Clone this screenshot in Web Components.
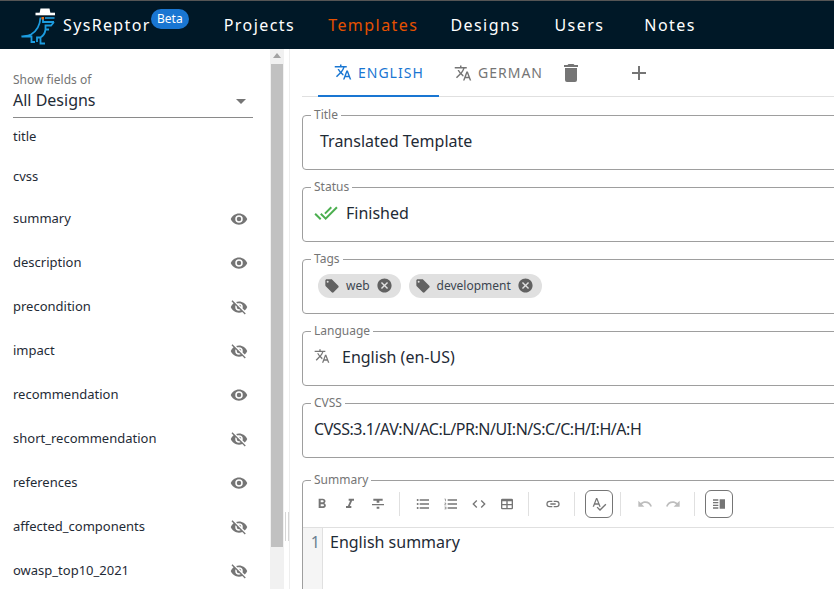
<!DOCTYPE html>
<html>
<head>
<meta charset="utf-8">
<title>SysReptor</title>
<style>
  html, body { margin: 0; height: 100%; overflow: hidden; }
  body { font-family: "Noto Sans", sans-serif; color: #1f2b36; background: #fff; }
</style>
</head>
<body>
<app-shell>
  <app-bar slot="bar">
    <nav-link>Projects</nav-link>
    <nav-link active style="margin-left:1px">Templates</nav-link>
    <nav-link>Designs</nav-link>
    <nav-link style="margin-left:2px">Users</nav-link>
    <nav-link style="margin-left:8px">Notes</nav-link>
  </app-bar>
  <fields-sidebar slot="side">
    <field-row style="--h:40px">title</field-row>
    <field-row style="--h:40px">cvss</field-row>
    <field-row eye="on">summary</field-row>
    <field-row eye="on">description</field-row>
    <field-row eye="off">precondition</field-row>
    <field-row eye="off">impact</field-row>
    <field-row eye="on">recommendation</field-row>
    <field-row eye="off">short_recommendation</field-row>
    <field-row eye="on">references</field-row>
    <field-row eye="off">affected_components</field-row>
    <field-row eye="off">owasp_top10_2021</field-row>
  </fields-sidebar>
  <lang-tabs slot="main"></lang-tabs>
  <outlined-field slot="main" label="Title"><span style="padding-left:6px">Translated Template</span></outlined-field>
  <outlined-field slot="main" label="Status">
    <mdi-icon name="checkall" size="24" color="#4caf50" style="margin-top:1px"></mdi-icon>
    <span style="margin-left:8px">Finished</span>
  </outlined-field>
  <outlined-field slot="main" label="Tags">
    <tag-chip>web</tag-chip>
    <tag-chip style="margin-left:8px">development</tag-chip>
  </outlined-field>
  <outlined-field slot="main" label="Language">
    <mdi-icon name="translate" size="16" color="#757575" style="margin-top:-2px"></mdi-icon>
    <span style="margin-left:12px">English (en-US)</span>
  </outlined-field>
  <outlined-field slot="main" label="CVSS"><span style="letter-spacing:-.45px">CVSS:3.1/AV:N/AC:L/PR:N/UI:N/S:C/C:H/I:H/A:H</span></outlined-field>
  <markdown-field slot="main" label="Summary" text="English summary"></markdown-field>
</app-shell>

<script>
const paths = {
  translate: "M12.87,15.07L10.33,12.56L10.36,12.53C12.1,10.59 13.34,8.36 14.07,6H17V4H10V2H8V4H1V6H12.17C11.5,7.92 10.44,9.75 9,11.35C8.07,10.32 7.3,9.19 6.69,8H4.69C5.42,9.63 6.42,11.17 7.67,12.56L2.58,17.58L4,19L9,14L12.11,17.11L12.87,15.07M18.5,10H16.5L12,22H14L15.12,19H19.87L21,22H23L18.5,10M15.88,17L17.5,12.67L19.12,17H15.88Z",
  trash: "M19,4H15.5L14.5,3H9.5L8.5,4H5V6H19M6,19A2,2 0 0,0 8,21H16A2,2 0 0,0 18,19V7H6V19Z",
  plus: "M19,13H13V19H11V13H5V11H11V5H13V11H19V13Z",
  eye: "M12,9A3,3 0 0,0 9,12A3,3 0 0,0 12,15A3,3 0 0,0 15,12A3,3 0 0,0 12,9M12,17A5,5 0 0,1 7,12A5,5 0 0,1 12,7A5,5 0 0,1 17,12A5,5 0 0,1 12,17M12,4.5C7,4.5 2.73,7.61 1,12C2.73,16.39 7,19.5 12,19.5C17,19.5 21.27,16.39 23,12C21.27,7.61 17,4.5 12,4.5Z",
  eyeoff: "M11.83,9L15,12.16C15,12.11 15,12.05 15,12A3,3 0 0,0 12,9C11.94,9 11.89,9 11.83,9M7.53,9.8L9.08,11.35C9.03,11.56 9,11.77 9,12A3,3 0 0,0 12,15C12.22,15 12.44,14.97 12.65,14.92L14.2,16.47C13.53,16.8 12.79,17 12,17A5,5 0 0,1 7,12C7,11.21 7.2,10.47 7.53,9.8M2,4.27L4.28,6.55L4.73,7C3.08,8.3 1.78,10 1,12C2.73,16.39 7,19.5 12,19.5C13.55,19.5 15.03,19.2 16.38,18.66L16.81,19.08L19.73,22L21,20.73L3.27,3M12,7A5,5 0 0,1 17,12C17,12.64 16.87,13.26 16.64,13.82L19.57,16.75C21.07,15.5 22.27,13.86 23,12C21.27,7.61 17,4.5 12,4.5C10.6,4.5 9.26,4.75 8,5.2L10.17,7.35C10.74,7.13 11.35,7 12,7Z",
  checkall: "M0.41,13.41L6,19L7.41,17.58L1.83,12M22.24,5.58L11.66,16.17L7.5,12L6.07,13.41L11.66,19L23.66,7M18,7L16.59,5.58L10.24,11.93L11.66,13.34L18,7Z",
  tag: "M5.5,7A1.5,1.5 0 0,1 4,5.5A1.5,1.5 0 0,1 5.5,4A1.5,1.5 0 0,1 7,5.5A1.5,1.5 0 0,1 5.5,7M21.41,11.58L12.41,2.58C12.05,2.22 11.55,2 11,2H4C2.89,2 2,2.89 2,4V11C2,11.55 2.22,12.05 2.59,12.41L11.58,21.41C11.95,21.77 12.45,22 13,22C13.55,22 14.05,21.77 14.41,21.41L21.41,14.41C21.78,14.05 22,13.55 22,13C22,12.44 21.77,11.94 21.41,11.58Z",
  close: "M12,2C17.53,2 22,6.47 22,12C22,17.53 17.53,22 12,22C6.47,22 2,17.53 2,12C2,6.47 6.47,2 12,2M15.59,7L12,10.59L8.41,7L7,8.41L10.59,12L7,15.59L8.41,17L12,13.41L15.59,17L17,15.59L13.41,12L17,8.41L15.59,7Z",
  bold: "M13.5,15.5H10V12.5H13.5A1.5,1.5 0 0,1 15,14A1.5,1.5 0 0,1 13.5,15.5M10,6.5H13A1.5,1.5 0 0,1 14.5,8A1.5,1.5 0 0,1 13,9.5H10M15.6,10.79C16.57,10.11 17.25,9 17.25,8C17.25,5.74 15.5,4 13.25,4H7V18H14.04C16.14,18 17.75,16.3 17.75,14.21C17.75,12.69 16.89,11.39 15.6,10.79Z",
  italic: "M10,4V7H12.21L8.79,15H6V18H14V15H11.79L15.21,7H18V4H10Z",
  strike: "M3,14H21V12H3M5,4V7H10V10H14V7H19V4M10,19H14V16H10V19Z",
  bullets: "M7,5H21V7H7V5M7,13V11H21V13H7M4,4.5A1.5,1.5 0 0,1 5.5,6A1.5,1.5 0 0,1 4,7.5A1.5,1.5 0 0,1 2.5,6A1.5,1.5 0 0,1 4,4.5M4,10.5A1.5,1.5 0 0,1 5.5,12A1.5,1.5 0 0,1 4,13.5A1.5,1.5 0 0,1 2.5,12A1.5,1.5 0 0,1 4,10.5M7,19V17H21V19H7M4,16.5A1.5,1.5 0 0,1 5.5,18A1.5,1.5 0 0,1 4,19.5A1.5,1.5 0 0,1 2.5,18A1.5,1.5 0 0,1 4,16.5Z",
  numbers: "M7,13V11H21V13H7M7,19V17H21V19H7M7,7V5H21V7H7M3,8V5H2V4H4V8H3M2,17V16H5V20H2V19H4V18.5H3V17.5H4V17H2M4.25,10A0.75,0.75 0 0,1 5,10.75C5,10.95 4.92,11.14 4.79,11.27L3.12,13H5V14H2V13.08L4,11H2V10H4.25Z",
  code: "M14.6,16.6L19.2,12L14.6,7.4L16,6L22,12L16,18L14.6,16.6M9.4,16.6L4.8,12L9.4,7.4L8,6L2,12L8,18L9.4,16.6Z",
  table: "M5,4H19A2,2 0 0,1 21,6V18A2,2 0 0,1 19,20H5A2,2 0 0,1 3,18V6A2,2 0 0,1 5,4M5,8V12H11V8H5M13,8V12H19V8H13M5,14V18H11V14H5M13,14V18H19V14H13Z",
  link: "M3.9,12C3.9,10.29 5.29,8.9 7,8.9H11V7H7A5,5 0 0,0 2,12A5,5 0 0,0 7,17H11V15.1H7C5.29,15.1 3.9,13.71 3.9,12M8,13H16V11H8V13M17,7H13V8.9H17C18.71,8.9 20.1,10.29 20.1,12C20.1,13.71 18.71,15.1 17,15.1H13V17H17A5,5 0 0,0 22,12A5,5 0 0,0 17,7Z",
  spell: "M21.59,11.59L13.5,19.68L9.83,16L8.42,17.41L13.5,22.5L23,13M6.43,11L8.5,5.5L10.57,11M12.45,16H14.54L9.43,3H7.57L2.46,16H4.55L5.67,13H11.31L12.45,16Z",
  undo: "M12.5,8C9.85,8 7.45,9 5.6,10.6L2,7V16H11L7.38,12.38C8.77,11.22 10.54,10.5 12.5,10.5C16.04,10.5 19.05,12.81 20.1,16L22.47,15.22C21.08,11.03 17.15,8 12.5,8Z",
  redo: "M18.4,10.6C16.55,9 14.15,8 11.5,8C6.85,8 2.92,11.03 1.53,15.22L3.9,16C4.95,12.81 7.96,10.5 11.5,10.5C13.45,10.5 15.23,11.22 16.62,12.38L13,16H22V7L18.4,10.6Z",
  split: "M3,5H11V7H3V5M3,9H11V11H3V9M3,13H11V15H3V13M3,17H11V19H3V17M13,5H21V19H13V5Z",
  menudown: "M7,10L12,15L17,10H7Z"
};

class MdiIcon extends HTMLElement {
  connectedCallback() {
    const size = this.getAttribute("size") || 24;
    const color = this.getAttribute("color") || "currentColor";
    this.attachShadow({ mode: "open" }).innerHTML = `
      <style>:host { display: inline-flex; flex: none; } svg { display: block; }</style>
      <svg width="${size}" height="${size}" viewBox="0 0 24 24"><path fill="${color}" d="${paths[this.getAttribute("name")]}"/></svg>`;
  }
}
customElements.define("mdi-icon", MdiIcon);

class AppShell extends HTMLElement {
  constructor() {
    super();
    this.attachShadow({ mode: "open" }).innerHTML = `
      <style>
        :host { display: flex; flex-direction: column; height: 589px; width: 834px; overflow: hidden; }
        .body { flex: 1; display: flex; min-height: 0; }
        .main { flex: 1; min-width: 0; overflow: hidden; padding-left: 12px; border-left: 1px solid #eeeeee; }
      </style>
      <slot name="bar"></slot>
      <div class="body">
        <slot name="side"></slot>
        <div class="main"><slot name="main"></slot></div>
      </div>`;
  }
}
customElements.define("app-shell", AppShell);

class AppBar extends HTMLElement {
  constructor() {
    super();
    this.attachShadow({ mode: "open" }).innerHTML = `
      <style>
        :host { display: flex; align-items: center; height: 48px; flex: none; background: #001827; border-top: 1px solid #555; color: #fff; }
        .logo { width: 43px; height: 48px; margin-left: 18px; flex: none; display: block; }
        .brand { font: 400 16px "Noto Sans", sans-serif; letter-spacing: 1.35px; margin-left: 2px; width: 88px; white-space: nowrap; }
        .beta { background: #1976d2; color: #fff; font: 400 12px "Noto Sans", sans-serif; height: 20px; line-height: 19px; border-radius: 10px; padding: 0 6px; margin: -12px 0 0 0; }
        nav { display: flex; margin-left: 19px; }
      </style>
      <svg class="logo" viewBox="18 0 43 48" fill="none">
        <path d="M35.5 13H55" stroke="#fff" stroke-width="2.6"/>
        <path d="M39.5 12.5L40.5 7.5H49.5L50.5 12.5Z" fill="#fff"/>
        <path d="M40.5 16.5C40 24 37 30 31 33.5C28 35 24 35 21.5 35.5H31.5V41L35 41" stroke="#1c9ce0" stroke-width="1.8"/>
        <path d="M43 17V21H54M54 21L51 24.5H45.5V28.5H49M45.5 28.5C45 32 43 35 40.5 36.5V42.5H45M40.5 36.5H37V41" stroke="#1c9ce0" stroke-width="1.8"/>
        <path d="M45 17H54.5" stroke="#1c9ce0" stroke-width="1.6"/>
        <rect x="41.5" y="16" width="2.5" height="2.5" fill="#e8711a"/>
      </svg>
      <span class="brand">SysReptor</span>
      <span class="beta">Beta</span>
      <nav><slot></slot></nav>`;
  }
}
customElements.define("app-bar", AppBar);

class NavLink extends HTMLElement {
  constructor() {
    super();
    this.attachShadow({ mode: "open" }).innerHTML = `
      <style>
        :host { display: block; padding: 0 16px; font: 400 16px "Noto Sans", sans-serif; letter-spacing: 1.45px; color: #fff; white-space: nowrap; }
        :host([active]) { color: #e65100; }
      </style>
      <slot></slot>`;
  }
}
customElements.define("nav-link", NavLink);

class FieldsSidebar extends HTMLElement {
  constructor() {
    super();
    this.attachShadow({ mode: "open" }).innerHTML = `
      <style>
        :host { display: flex; flex: none; width: 289px; height: 540px; overflow: hidden; }
        .col { width: 270px; flex: none; box-sizing: border-box; padding: 24px 17px 0 13px; }
        .lbl { font-size: 12px; line-height: 14px; color: #757575; }
        .select { display: flex; align-items: center; justify-content: space-between; height: 27px; border-bottom: 1px solid #8a8a8a; font-size: 16px; padding-bottom: 3px; margin-bottom: -2px; }
        .select span { margin-bottom: 2px; }
        .bar { width: 14px; flex: none; background: #f1f1f1; display: flex; flex-direction: column; align-items: center; }
        .arrow { width: 0; height: 0; margin-top: 4px; border: 4px solid transparent; border-top: 0; border-bottom: 5px solid #a3a3a3; }
        .thumb { width: 12px; height: 483px; margin-top: 6px; background: #c1c1c1; }
        .handle { width: 5px; flex: none; display: flex; flex-direction: column; justify-content: flex-end; padding-bottom: 48px; box-sizing: border-box; }
        .handle i { display: block; box-sizing: border-box; height: 29px; width: 4px; margin-left: 1px; border: solid #d6d6d6; border-width: 0 1px; }
      </style>
      <div class="col">
        <div class="lbl">Show fields of</div>
        <div class="select"><span>All Designs</span><mdi-icon name="menudown" size="24" color="#757575"></mdi-icon></div>
        <slot></slot>
      </div>
      <div class="bar"><div class="arrow"></div><div class="thumb"></div></div>
      <div class="handle"><i></i></div>`;
  }
}
customElements.define("fields-sidebar", FieldsSidebar);

class FieldRow extends HTMLElement {
  connectedCallback() {
    const eye = this.getAttribute("eye");
    const icon = eye ? `<mdi-icon name="${eye === "on" ? "eye" : "eyeoff"}" size="18" color="#757575"></mdi-icon>` : "";
    this.attachShadow({ mode: "open" }).innerHTML = `
      <style>
        :host { display: flex; align-items: center; justify-content: space-between; height: var(--h, 44px); font-size: 13px; padding-right: 1px; }
        mdi-icon { margin: 1px 4px 0 0; }
      </style>
      <slot></slot>${icon}`;
  }
}
customElements.define("field-row", FieldRow);

class LangTabs extends HTMLElement {
  constructor() {
    super();
    this.attachShadow({ mode: "open" }).innerHTML = `
      <style>
        :host { display: flex; align-items: center; height: 47px; margin-bottom: 11px; border-bottom: 1px solid #e0e0e0; width: 600px; padding-left: 16px; font-size: 14px; letter-spacing: 1px; color: #757575; }
        .tab { display: flex; align-items: center; gap: 6px; height: 47px; box-sizing: border-box; padding: 0 16px; }
        .on { color: #1976d2; width: 121px; border-bottom: 2px solid #1976d2; margin-bottom: -1px; height: 48px; }
        .off { margin-left: -1px; }
        .add { margin-left: 44px; }
      </style>
      <div class="tab on"><mdi-icon name="translate" size="18" color="#1976d2"></mdi-icon><span>ENGLISH</span></div>
      <div class="tab off"><mdi-icon name="translate" size="18" color="#757575"></mdi-icon><span>GERMAN</span></div>
      <mdi-icon name="trash" size="24" color="#757575"></mdi-icon>
      <mdi-icon class="add" name="plus" size="24" color="#757575"></mdi-icon>`;
  }
}
customElements.define("lang-tabs", LangTabs);

const fieldCss = `
  :host { display: block; width: 560px; margin-bottom: 10px; }
  fieldset { margin: 0; padding: 0; border: 1px solid #9e9e9e; border-radius: 4px; min-width: 0; }
  legend { margin-left: 8px; padding: 0 3px; font-size: 12px; line-height: 14px; color: #757575; }
`;

class OutlinedField extends HTMLElement {
  connectedCallback() {
    this.attachShadow({ mode: "open" }).innerHTML = `
      <style>${fieldCss}
        .box { display: flex; align-items: center; height: 47px; padding: 0 11px 10px; box-sizing: border-box; font-size: 16px; }
      </style>
      <fieldset>
        <legend>${this.getAttribute("label")}</legend>
        <div class="box"><slot></slot></div>
      </fieldset>`;
  }
}
customElements.define("outlined-field", OutlinedField);

class TagChip extends HTMLElement {
  constructor() {
    super();
    this.attachShadow({ mode: "open" }).innerHTML = `
      <style>
        :host { display: inline-flex; align-items: center; height: 24px; border-radius: 12px; background: #e0e0e0; padding: 0 8px 0 6px; margin: 2px 0 0 4px; font-size: 12px; color: #3c4650; }
        .txt { margin: 0 6px; }
      </style>
      <mdi-icon name="tag" size="16" color="#616161"></mdi-icon>
      <span class="txt"><slot></slot></span>
      <mdi-icon name="close" size="17" color="#616161"></mdi-icon>`;
  }
}
customElements.define("tag-chip", TagChip);

class ToolBtn extends HTMLElement {
  connectedCallback() {
    const off = this.hasAttribute("disabled");
    this.attachShadow({ mode: "open" }).innerHTML = `
      <style>
        :host { display: flex; align-items: center; justify-content: center; width: 28px; height: 28px; box-sizing: border-box; flex: none; }
        :host([boxed]) { border: 1px solid #757575; border-radius: 6px; }
      </style>
      <mdi-icon name="${this.getAttribute("icon")}" size="16" color="${off ? "#bdbdbd" : "#757575"}"></mdi-icon>`;
  }
}
customElements.define("tool-btn", ToolBtn);

class MarkdownField extends HTMLElement {
  connectedCallback() {
    const btn = (icon, extra = "") => `<tool-btn icon="${icon}" ${extra}></tool-btn>`;
    this.attachShadow({ mode: "open" }).innerHTML = `
      <style>${fieldCss}
        :host { margin-top: 15px; }
        fieldset { height: 160px; }
        .toolbar { display: flex; align-items: center; height: 41px; padding: 0 0 7px 5px; box-sizing: border-box; border-bottom: 1px solid #e0e0e0; }
        .sep { width: 1px; height: 24px; background: #e0e0e0; margin: 0 10px 0 7px; flex: none; }
        .sep:first-of-type { margin-right: 9px; }
        .edit { display: flex; height: 120px; font-size: 16px; }
        .gutter { width: 20px; background: #f5f5f5; border-right: 1px solid #e0e0e0; text-align: right; padding-right: 2px; box-sizing: border-box; color: #6b7f90; line-height: 28px; }
        .text { padding-left: 7px; line-height: 28px; }
      </style>
      <fieldset>
        <legend>${this.getAttribute("label")}</legend>
        <div class="toolbar">
          ${btn("bold")}${btn("italic")}${btn("strike")}<div class="sep"></div>
          ${btn("bullets")}${btn("numbers")}${btn("code")}${btn("table")}<div class="sep"></div>
          ${btn("link")}<div class="sep"></div>
          ${btn("spell", "boxed")}<div class="sep"></div>
          ${btn("undo", "disabled")}${btn("redo", "disabled")}<div class="sep"></div>
          ${btn("split", "boxed")}
        </div>
        <div class="edit"><div class="gutter">1</div><div class="text">${this.getAttribute("text")}</div></div>
      </fieldset>`;
  }
}
customElements.define("markdown-field", MarkdownField);
</script>
</body>
</html>
